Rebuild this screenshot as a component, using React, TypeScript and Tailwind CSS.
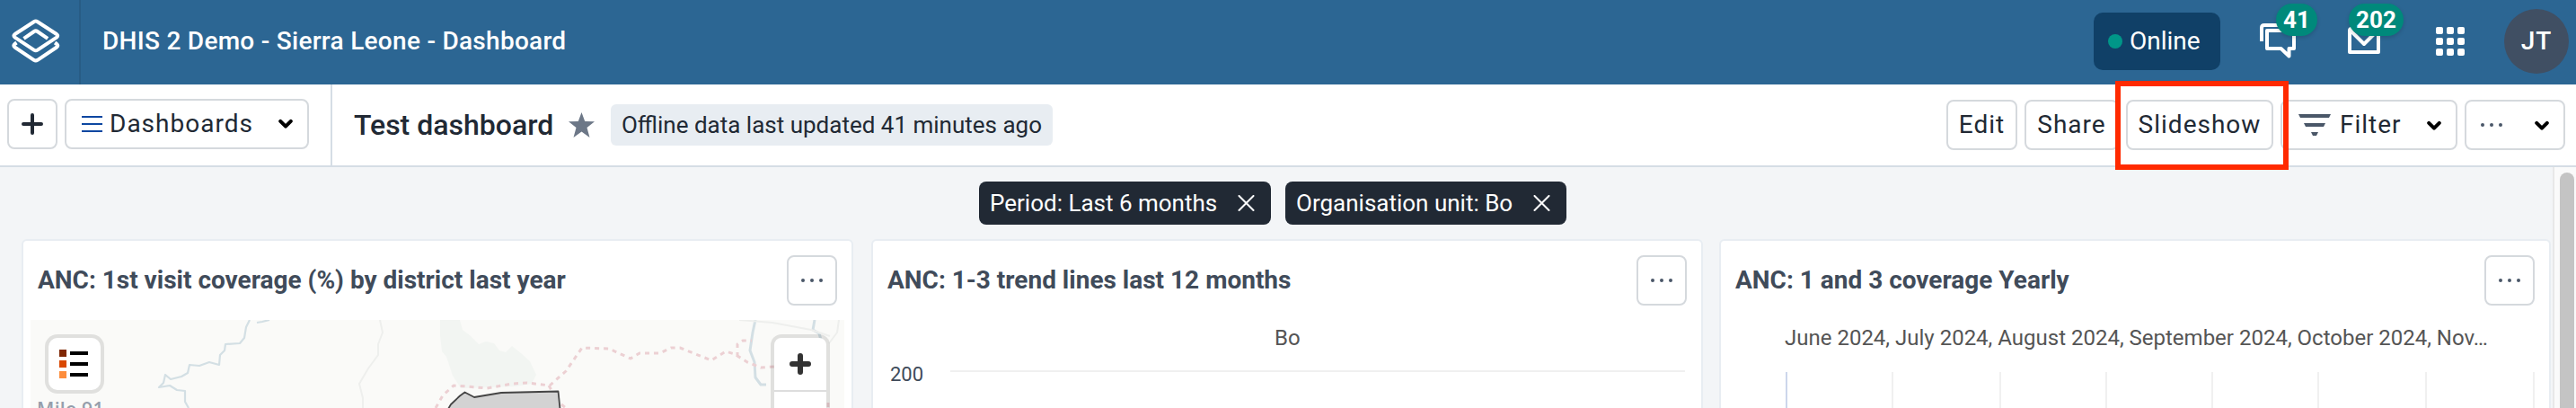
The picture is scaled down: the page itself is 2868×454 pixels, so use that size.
import type { ReactNode } from "react";

function Chevron({ className = "" }: { className?: string }) {
  return (
    <svg className={`shrink-0 ${className}`} width="16" height="12" viewBox="0 0 16 12" fill="none" stroke="#000" strokeWidth="4" strokeLinecap="round" strokeLinejoin="round">
      <path d="M2.2 2.8 L8 8.6 L13.8 2.8" />
    </svg>
  );
}

function Dots() {
  return (
    <svg className="shrink-0" width="24" height="4" viewBox="0 0 24 4" fill="#4a5768">
      <circle cx="2" cy="2" r="2" />
      <circle cx="12" cy="2" r="2" />
      <circle cx="22" cy="2" r="2" />
    </svg>
  );
}

function ToolButton({ className, children }: { className: string; children?: ReactNode }) {
  return (
    <button className={`flex h-14 shrink-0 items-center rounded-[8px] border-2 border-[#d5d9dd] bg-white text-[28px] leading-8 tracking-[1px] whitespace-nowrap text-[#212934] ${className}`}>
      {children}
    </button>
  );
}

function CountBadge({ className, children }: { className: string; children: ReactNode }) {
  return (
    <span className={`absolute flex h-9 items-center justify-center rounded-full bg-[#00897b] pb-px text-[26px] font-bold leading-8 shadow-[0_2px_4px_rgba(0,0,0,0.15)] ${className}`}>
      {children}
    </span>
  );
}

function HeaderBar() {
  return (
    <header className="flex h-[94px] items-center bg-[#2c6693] pb-[2px] text-white">
      <div className="-mb-[2px] flex h-[94px] w-[90px] shrink-0 items-center border-r-2 border-[#285c85] pb-[2px] pl-[13px]">
        <svg width="54" height="50" viewBox="0 0 54 50" fill="none" stroke="#fff" strokeWidth="4" strokeLinejoin="round">
          <path d="M24.8 3.2 Q26.8 2 28.8 3.2 L50 17 Q52.4 18.8 50 20.6 L28.8 34.6 Q26.8 35.8 24.8 34.6 L3.6 20.6 Q1.2 18.8 3.6 17 Z" />
          <path d="M13.5 21.8 L25 14 Q26.8 12.8 28.6 14 L40.1 21.8" />
          <path d="M5.5 26.5 L3.4 28 Q1.2 29.8 3.4 31.5 L24.8 45.8 Q26.8 47 28.8 45.8 L50.2 31.5 Q52.4 29.8 50.2 28 L48.1 26.5" />
        </svg>
      </div>
      <h1 className="ml-[24px] text-[28px] font-medium leading-8 tracking-[0.28px] whitespace-nowrap">DHIS 2 Demo - Sierra Leone - Dashboard</h1>
      <div className="ml-auto flex items-center pr-[8px]">
        <div className="flex h-16 w-[141px] items-center rounded-[10px] bg-[#104067] pl-[16px] text-[28px] leading-8">
          <span className="mr-[8px] size-4 rounded-full bg-[#009688]" />
          Online
        </div>
        <div className="relative ml-[44px] h-[92px] w-[40px]">
          <svg className="mt-[26px]" width="40" height="40" viewBox="0 0 40 40" fill="none" stroke="#fff" strokeWidth="4" strokeLinejoin="round">
            <path d="M2 20 V5 Q2 2 5 2 H34" />
            <path d="M8 8 H38 V28 H32.5 V36.5 L23.5 28 H8 Z" />
          </svg>
          <CountBadge className="top-1 left-[18px] w-[46px]">41</CountBadge>
        </div>
        <div className="relative ml-[58px] h-[92px] w-[36px]">
          <svg className="mt-[30px]" width="36" height="30" viewBox="0 0 36 30" fill="none" stroke="#fff" strokeWidth="4" strokeLinejoin="round">
            <path d="M2 4 Q2 2 4 2 H32 Q34 2 34 4 V28 H2 Z" />
            <path d="M3 4 L18 19 L33 4" />
          </svg>
          <CountBadge className="top-1 left-px w-[61px]">202</CountBadge>
        </div>
        <div className="ml-[62px] grid grid-cols-3 gap-1">
          {Array.from({ length: 9 }, (_, i) => (
            <span key={i} className="size-2 rounded-[2px] bg-white" />
          ))}
        </div>
        <div className="ml-[44px] flex size-[72px] items-center justify-center rounded-full bg-[#404f63] text-[28px] font-medium leading-8 tracking-[1px]">JT</div>
      </div>
    </header>
  );
}

function Toolbar() {
  return (
    <div className="flex h-[92px] border-b-2 border-[#d5dde5] bg-white">
      <div className="flex w-[370px] shrink-0 items-start gap-2 border-r-2 border-[#d5dde5] pt-4 pl-2">
        <ToolButton className="w-14 justify-center">
          <svg width="24" height="24" viewBox="0 0 24 24" stroke="#212934" strokeWidth="4" strokeLinecap="round">
            <path d="M12 2 V22 M2 12 H22" />
          </svg>
        </ToolButton>
        <ToolButton className="w-[272px] pl-[16px]">
          <svg className="mr-[8px]" width="24" height="18" viewBox="0 0 24 18" fill="#0d47a1">
            <path d="M1 0 H24 V2 H1 Z M1 8 H24 V10 H1 Z M1 16 H24 V18 H1 Z" />
          </svg>
          <span className="pb-px">Dashboards</span>
          <Chevron className="mr-[16px] ml-auto" />
        </ToolButton>
      </div>
      <h2 className="mt-[26px] ml-[24px] w-[222px] shrink-0 text-[32px] font-medium leading-[38px] whitespace-nowrap text-[#212934]">Test dashboard</h2>
      <svg className="mt-[31px] ml-[17px] shrink-0" width="29" height="28" viewBox="0 0 29 28" fill="#6c7787">
        <path d="M14.5 0 L18.2 10 L29 10.3 L20.5 17 L23.5 28 L14.5 21.6 L5.5 28 L8.5 17 L0 10.3 L10.8 10 Z" />
      </svg>
      <div className="mt-[22px] ml-[18px] flex h-[46px] w-[492px] shrink-0 items-center justify-center rounded-[6px] bg-[#e8edf2] pb-px text-[26px] leading-8 whitespace-nowrap text-[#212934]">
        Offline data last updated 41 minutes ago
      </div>
      <div className="mt-[17px] mr-3 ml-auto flex gap-2">
        <ToolButton className="w-[79px] justify-center">Edit</ToolButton>
        <ToolButton className="w-[105px] justify-center">Share</ToolButton>
        <ToolButton className="w-[164px] justify-center">Slideshow</ToolButton>
        <ToolButton className="w-[197px] pl-[18px]">
          <svg className="mr-[10px]" width="36" height="24" viewBox="0 0 36 24" fill="#4a5768">
            <path d="M0 0 H36 L34 4 H2 Z M6 10 H30 L28 14 H8 Z M14 20 H22 L20 24 H16 Z" />
          </svg>
          <span>Filter</span>
          <Chevron className="mt-[2px] mr-[16px] ml-auto" />
        </ToolButton>
        <ToolButton className="w-[112px] pl-[16px]">
          <Dots />
          <Chevron className="mt-[2px] mr-[16px] ml-auto" />
        </ToolButton>
      </div>
    </div>
  );
}

function FilterChip({ className, children }: { className: string; children: ReactNode }) {
  return (
    <div className={`flex h-12 items-center rounded-[8px] bg-[#212934] pb-px pl-[12px] text-[26px] leading-8 whitespace-nowrap text-white ${className}`}>
      {children}
      <svg className="mt-px mr-[18px] ml-auto" width="19" height="18" viewBox="0 0 19 18" stroke="#fff" strokeWidth="2" strokeLinecap="round">
        <path d="M1.5 1 L17.5 17 M17.5 1 L1.5 17" />
      </svg>
    </div>
  );
}

function Card({ title, children }: { title: string; children: ReactNode }) {
  return (
    <section className="flex h-[220px] w-[926px] shrink-0 flex-col overflow-hidden rounded-t-[6px] border-2 border-b-0 border-[#e8edf2] bg-white">
      <div className="flex h-[88px] shrink-0 items-start justify-between pt-4 pr-4 pl-4">
        <h3 className="mt-[12px] text-[28px] font-bold leading-8 whitespace-nowrap text-[#404b5a]">{title}</h3>
        <button className="flex size-14 items-center justify-center rounded-[8px] border-2 border-[#d5d9dd]">
          <Dots />
        </button>
      </div>
      {children}
    </section>
  );
}

function DistrictMap() {
  return (
    <div className="relative ml-[8px] h-[98px] w-[906px] shrink-0 overflow-hidden bg-[#fafaf8]">
      <svg width="906" height="98" viewBox="0 0 906 98" fill="none" strokeLinejoin="round">
        <path fill="#f2f5f2" d="M456 0 H478 L481 11 L489 17 L499 27 L507 24 L516 26 L522 34 L529 36 L536 29 L546 37 L556 46 L563 61 L558 71 L540 74 L479 76 L470 62 L463 41 L458 35 L456 17 Z" />
        <g stroke="#d3dfe4" strokeWidth="2.2">
          <path d="M244 0 L240 8 L238 20 L233 26 L217 27 L216 34 L211 39 L210 50 L199 47 L188 51 L177 50 L175 59 L168 63 L156 66 L150 61 L148 70 L143 75 L155 73 L163 78 L172 79 L172 91 L176 98" />
          <path d="M252 3 L258 2 L266 0" />
          <path strokeWidth="3" d="M807 0 L804 14 L801 34 L806 47 L807 64 L813 72 L819 72" />
          <path strokeWidth="3" d="M873 0 L871 11 L878 15 L880 22" />
        </g>
        <g stroke="#eeefed" strokeWidth="2">
          <path d="M389 0 L392 14 L387 27 L387 39 L376 54 L366 71 L370 87 L370 98" />
          <path d="M789 0 L826 3 L869 11 L890 18" />
          <path d="M900 0 L898 14 L889 26" />
        </g>
        <g stroke="#ecd0d3" strokeWidth="3" strokeDasharray="5 5">
          <path d="M451 98 L459 84 L471 73 L486 74 L508 76 L536 71 L553 70 L578 73 L596 57 L614 31 L644 32 L668 43 L678 37 L701 37 L713 31 L723 31 L758 45 L774 35 L784 38 L798 47 L813 53 L828 52" />
          <path d="M787 41 V27 L793 23 H803" />
          <path d="M577 73 L581 80" />
          <path d="M591 94 L596 98 M888 92 V98" />
        </g>
        <path d="M465 99 L468 94 L478 84.5 L483.5 80.5 L494 86 L524 81 L587.5 79.5 L589.5 99" fill="#d3d3d3" stroke="#444" strokeWidth="1.8" />
        <text x="7" y="107" fontFamily="Open Sans" fontSize="21" fontWeight="600" letterSpacing="0.3" fill="#959eab">Mile 91</text>
      </svg>
      <div className="absolute top-4 left-4 flex size-[66px] flex-col justify-center gap-1 rounded-[14px] border-4 border-black/10 bg-white bg-clip-padding pl-[12px]">
        <div className="flex items-center gap-1"><span className="size-2 bg-[#7f2704]" /><span className="h-1 w-5 bg-black" /></div>
        <div className="flex items-center gap-1"><span className="size-2 bg-[#d94801]" /><span className="h-1 w-5 bg-black" /></div>
        <div className="flex items-center gap-1"><span className="size-2 bg-[#fd8d3c]" /><span className="h-1 w-5 bg-black" /></div>
      </div>
      <div className="absolute top-4 left-[824px] h-[130px] w-[66px] rounded-[12px] border-4 border-black/10 bg-white bg-clip-padding">
        <div className="flex h-[60px] items-center justify-center border-b-2 border-[#ddd]">
          <svg width="24" height="24" viewBox="0 0 24 24" stroke="#333" strokeWidth="6" strokeLinecap="round">
            <path d="M12 3 V21 M3 12 H21" />
          </svg>
        </div>
      </div>
    </div>
  );
}

function TrendChart() {
  return (
    <div className="flex flex-col">
      <div className="mt-[4px] pl-[447px] text-[24px] leading-8 text-[#555]">Bo</div>
      <div className="mt-[8px] flex h-8 items-start pl-[19px]">
        <span className="w-[67px] pt-[3px] text-[22px] leading-7 text-[#404b5a]">200</span>
        <span className="mt-[12px] h-[2px] w-[818px] bg-[#f0f0f0]" />
      </div>
    </div>
  );
}

function YearlyChart() {
  return (
    <div className="flex flex-col">
      <div className="mt-[4px] pl-[71px] text-[24px] leading-8 whitespace-nowrap text-[#555]">
        June 2024, July 2024, August 2024, September 2024, October 2024, Nov…
      </div>
      <svg className="mt-[22px]" width="922" height="40" viewBox="0 0 922 40">
        <path d="M73 0 V40" stroke="#ccd6eb" strokeWidth="2" />
        <path d="M191 0 V40 M311 0 V40 M429 0 V40 M547 0 V40 M665 0 V40 M785 0 V40 M905 0 V40" stroke="#f0f0f0" strokeWidth="2" />
      </svg>
    </div>
  );
}

export default function App() {
  return (
    <div className="relative h-[454px] w-[2868px] overflow-hidden bg-[#f3f5f7] font-[Roboto,sans-serif]">
      <HeaderBar />
      <Toolbar />
      <div className="flex h-[268px]">
        <main className="flex w-[2842px] shrink-0 flex-col">
          <div className="flex h-20 shrink-0 gap-4 pt-4 pl-[1090px]">
            <FilterChip className="w-[325px]">Period: Last 6 months</FilterChip>
            <FilterChip className="w-[313px]">Organisation unit: Bo</FilterChip>
          </div>
          <div className="flex pl-6">
            <Card title="ANC: 1st visit coverage (%) by district last year">
              <DistrictMap />
            </Card>
            <div className="w-5 shrink-0" />
            <Card title="ANC: 1-3 trend lines last 12 months">
              <TrendChart />
            </Card>
            <div className="w-[18px] shrink-0" />
            <Card title="ANC: 1 and 3 coverage Yearly">
              <YearlyChart />
            </Card>
          </div>
        </main>
        <div className="flex w-[26px] shrink-0 border-l-2 border-[#e8e8e8] bg-[#fafafa] pt-[6px] pl-[6px]">
          <div className="h-[300px] w-4 rounded-full bg-[#c4c4c4]" />
        </div>
      </div>
      <div className="absolute top-[90px] left-[2355px] h-[99px] w-[193px] border-6 border-[#ff2a00]" />
    </div>
  );
}
